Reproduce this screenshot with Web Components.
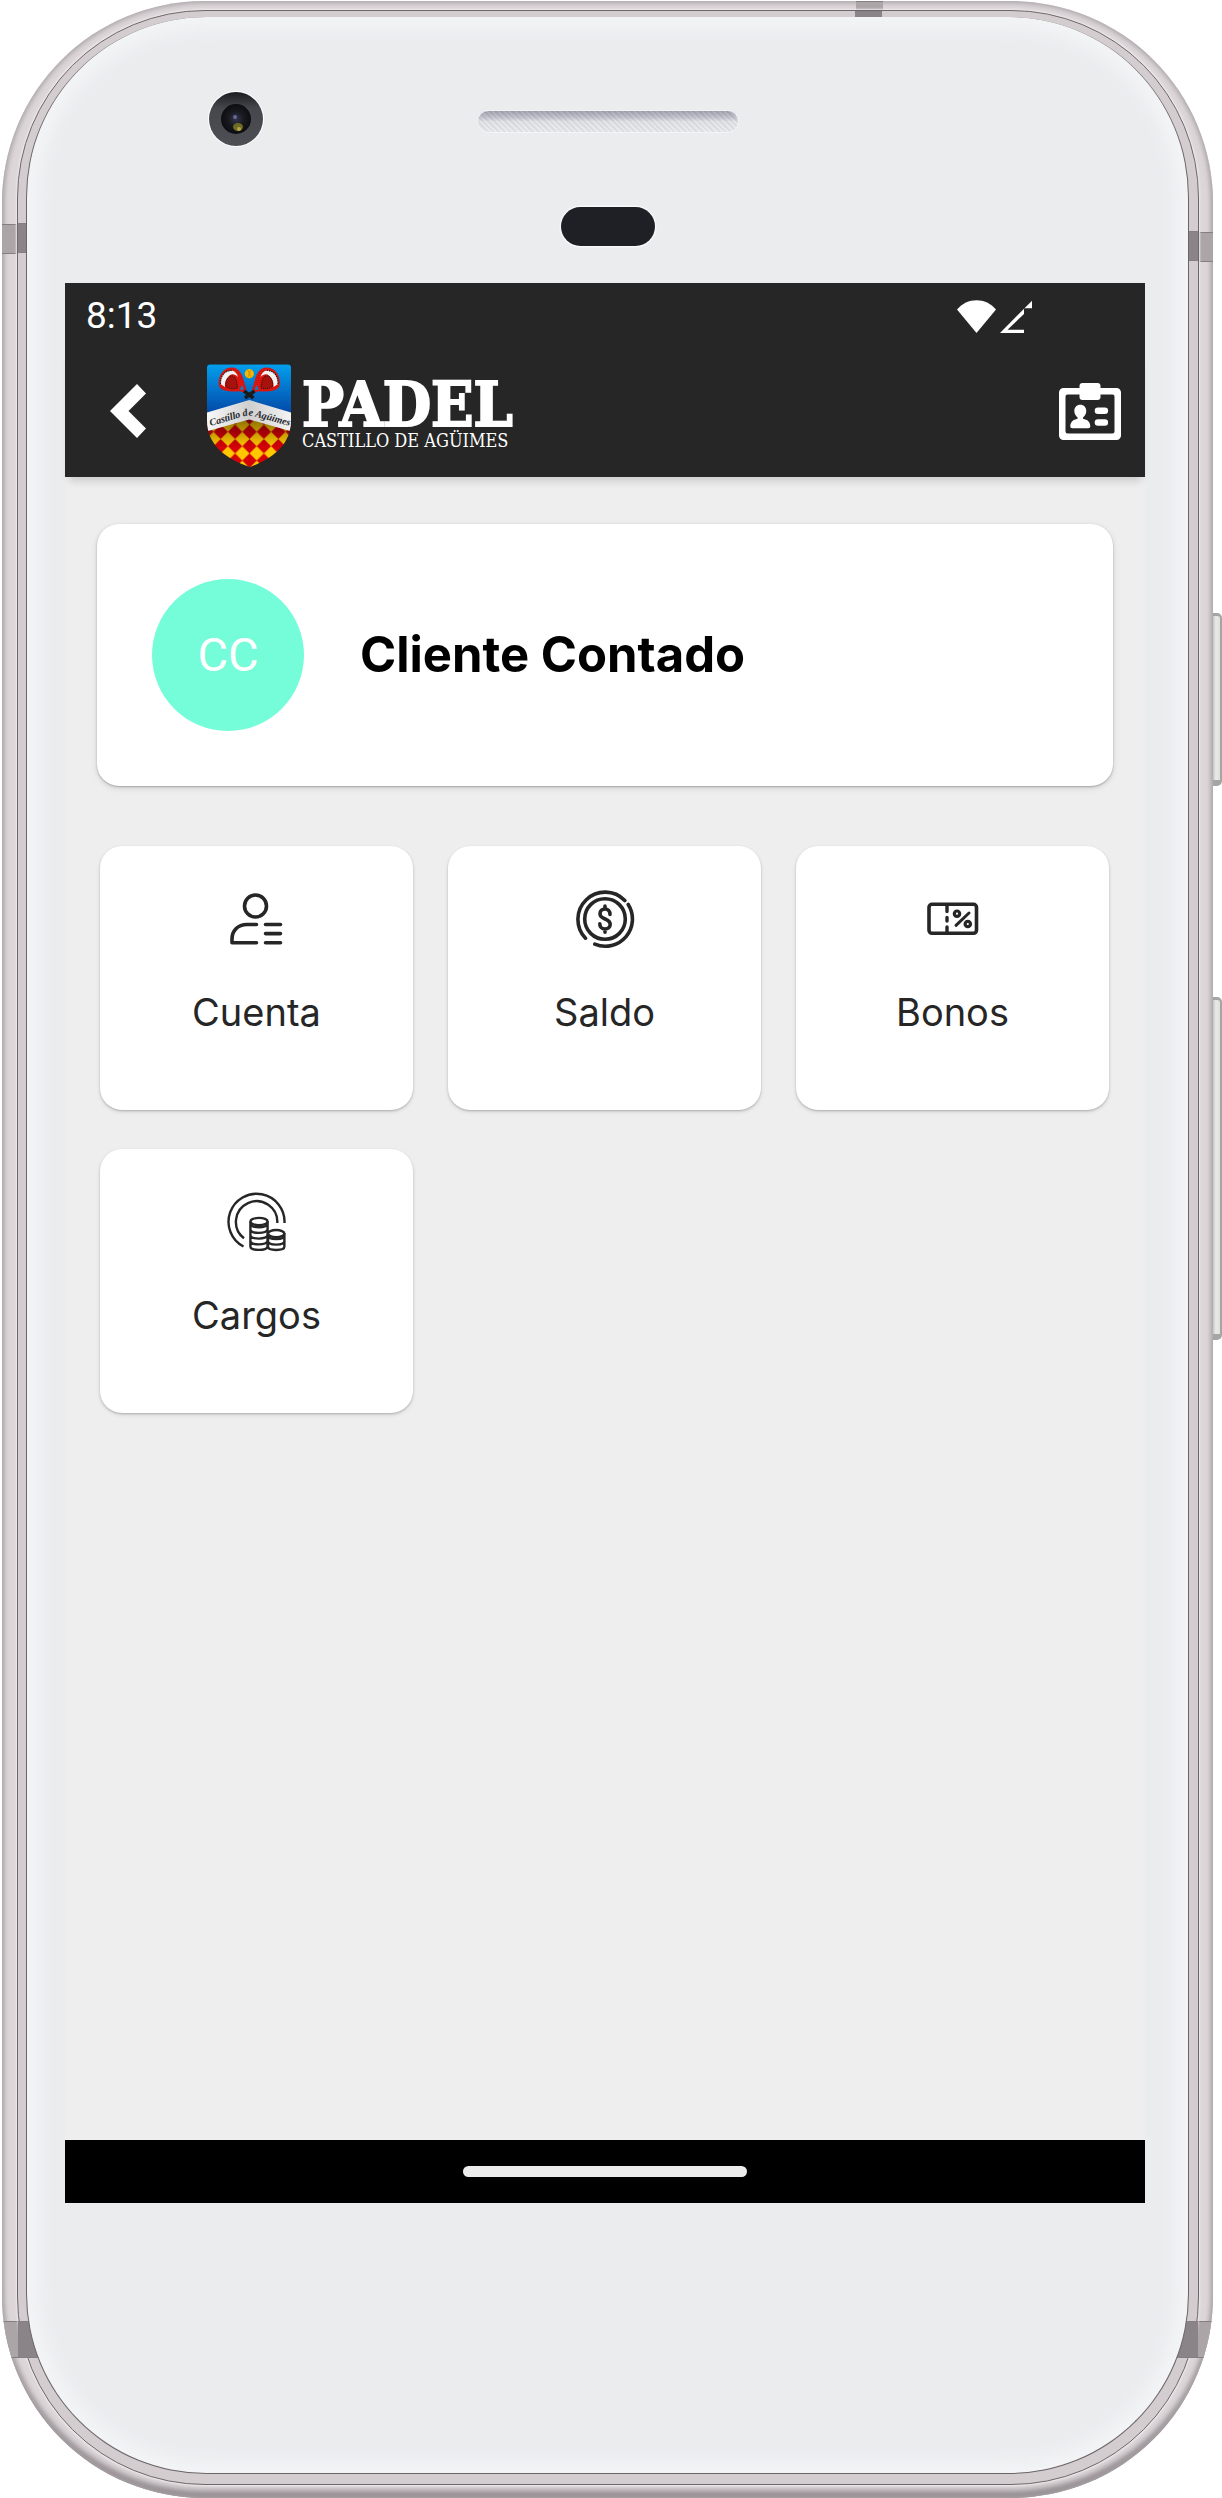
<!DOCTYPE html>
<html lang="es">
<head>
<meta charset="utf-8">
<meta name="viewport" content="width=device-width, initial-scale=1">
<title>Padel Castillo de Agüimes</title>
<style>
  body {
    margin: 0;
    background: #fff;
    font-family: Inter, "Open Sans", sans-serif;
    color: #262626;
  }

  .screen-content {
    flex: 1;
    display: flex;
    flex-direction: column;
    gap: 60px;
    padding: 47px 32px;
  }

  .menu {
    display: grid;
    grid-template-columns: repeat(3, 1fr);
    gap: 39px 35px;
    margin: 0 4px 0 3px;
  }
</style>
</head>
<body>
  <phone-device>
    <status-bar>8:13</status-bar>
    <app-bar>
      <club-logo>
        PADEL
        <span slot="subtitle">CASTILLO DE AGÜIMES</span>
      </club-logo>
    </app-bar>
    <main class="screen-content">
      <client-card initials="CC">Cliente Contado</client-card>
      <nav class="menu">
        <menu-tile>
          <svg slot="icon" viewBox="0 0 60 60" width="60" height="60" fill="none" stroke="#262626" stroke-width="3.6" stroke-linecap="round" stroke-linejoin="round">
            <circle cx="28.5" cy="17" r="11"/>
            <path d="M29.5 35.5H20C10.500 35.500 5 42 5 50v3.700h24.500M38.500 35.500h15M38.500 44.600h15M38.500 53.700h15"/>
          </svg>
          Cuenta
        </menu-tile>
        <menu-tile>
          <svg slot="icon" viewBox="0 0 60 60" width="60" height="60" fill="none" stroke="#262626" stroke-width="3.6" stroke-linecap="round">
            <circle cx="30" cy="30" r="20.300"/>
            <path d="M49.800 11.500A27.200 27.200 0 0 0 10.500 49.200M53.200 15.500A27.200 27.200 0 0 1 19.800 55.200"/>
            <path d="M35 25.500c0-3.300-2-5.500-5-5.500s-5 2-5 4.700c0 6.300 10.200 4.300 10.200 10.600 0 2.800-2.200 4.800-5.200 4.800s-5.200-2.200-5.200-5.400M30 17v3M30 40v3.200" stroke-width="3.600"/>
          </svg>
          Saldo
        </menu-tile>
        <menu-tile>
          <svg slot="icon" viewBox="0 0 60 60" width="60" height="60" fill="none" stroke="#262626" stroke-width="3.600" stroke-linecap="round">
            <rect x="6" y="15.300" width="47.500" height="29" rx="3"/>
            <path d="M24 17v5.500M24 28.500v3.500M24 38v5" stroke-width="3.400"/>
            <circle cx="34" cy="24.700" r="2.700" stroke-width="3.200"/>
            <circle cx="44.800" cy="35" r="2.700" stroke-width="3.200"/>
            <path d="M33 36.300L46 24" stroke-width="3"/>
          </svg>
          Bonos
        </menu-tile>
        <menu-tile>
          <svg slot="icon" viewBox="0 0 60 60" width="60" height="60" fill="none" stroke="#262626" stroke-width="2.400">
            <path d="M57.500 31A28 28 0 1 0 16.500 54.500M50.300 31A20.700 20.700 0 1 0 17 46.300"/>
            <ellipse cx="32" cy="29.500" rx="8.600" ry="3.600"/>
            <path d="M23.400 29.500v25c0 4.500 17.200 4.500 17.200 0v-25M23.400 31.500c0 5 17.200 5 17.200 0M23.400 37.300c0 4.800 17.200 4.800 17.200 0M23.400 43c0 4.800 17.200 4.800 17.200 0M23.400 48.800c0 4.800 17.200 4.800 17.200 0"/>
            <ellipse cx="49.200" cy="41.600" rx="8.200" ry="3.600"/>
            <path d="M57.400 41.600v13c0 4.500-16.400 4.500-16.400 0v-13M41 43.500c0 4.800 16.400 4.800 16.400 0M41 49c0 4.800 16.400 4.800 16.400 0"/>
          </svg>
          Cargos
        </menu-tile>
      </nav>
    </main>
    <gesture-bar></gesture-bar>
  </phone-device>

<script>
  function attach(el, html) {
    const template = document.createElement("template");
    template.innerHTML = html;
    el.attachShadow({ mode: "open" }).appendChild(template.content.cloneNode(true));
  }

  // the white handset: metal rim, bevel, glass face and the screen slot
  class PhoneDevice extends HTMLElement {
    constructor() {
      super();
      attach(this, `
        <style>
          :host {
            display: flex;
            position: relative;
            box-sizing: border-box;
            min-height: 100vh;
            padding: 1px 9px 0 2px;
          }

          .rim, .bevel, .face, .screen {
            display: flex;
            flex-direction: column;
            flex: 1;
            min-width: 0;
          }

          .rim {
            position: relative;
            overflow: hidden;
            padding: 9px 14px 13px 15px;
            border-radius: 202px;
            background: #dcd6d9;
            box-shadow: inset 0 0 5px 2px #aba4a8, inset 0 -9px 6px -2px #8b8488;
          }

          .bevel {
            position: relative;
            padding: 6px 9px 10px 8px;
            border: 1px solid #6f676b;
            border-radius: 188px;
            background: #d3cdd0;
            box-shadow: 0 0 2px 1px #eee9eb;
          }

          .band {
            position: absolute;
            height: 30px;
            width: 50px;
            background: #aba5a8;
            border: solid #857d82;
            border-width: 1px 0;
            box-sizing: border-box;
          }
          .tl { left: 0; top: 223px; }
          .tr { right: 0; top: 231px; }
          .bl { left: 0; bottom: 140px; height: 37px; }
          .br { right: 0; bottom: 140px; height: 37px; }
          .top { left: 70.500%; top: 0; width: 27px; }

          .bevel .band { background: #8a8387; }
          .bevel .tl { top: 212px; }
          .bevel .tr { top: 220px; }
          .bevel .bl, .bevel .br { bottom: 126px; }
          .bevel .top { left: 70.900%; }

          .face {
            position: relative;
            padding: 0 43px 0 38px;
            border-radius: 180px;
            border: solid #6b6468;
            border-width: 0 1px 1px;
            background: #ebecee;
            box-shadow: inset 0 0 16px 12px #f3f4f6;
          }

          .top-bezel {
            display: grid;
            grid-template-columns: 1fr 262px 1fr;
            align-items: start;
            justify-items: center;
            box-sizing: border-box;
            height: 266px;
            padding: 74px 0 0 5px;
          }

          .camera {
            justify-self: start;
            margin-left: 138px;
          }

          .speaker {
            width: 262px;
            height: 23px;
            margin-top: 19px;
            box-sizing: border-box;
            border-radius: 12px;
            border: 1px solid #f4f4f6;
            background:
              repeating-linear-gradient(45deg, #ffffff33 0 2px, #bfc1c733 2px 4px),
              linear-gradient(#8f919f, #b5b7c2 30%, #dcdde1 50%, #e6e7ea);
          }

          .sensor {
            grid-column: 2;
            width: 94px;
            height: 39px;
            margin-top: 22px;
            border-radius: 20px;
            background: #1e2025;
            box-shadow: 0 0 2px 1px #fff;
          }

          .screen {
            background: #eee;
          }

          .bottom-bezel {
            height: 270px;
          }

          .key {
            position: absolute;
            right: 0;
            width: 9px;
            box-sizing: border-box;
            border-radius: 0 5px 5px 0;
            border: solid #a5a6a4;
            border-width: 3px 2px 6px 0;
            background: linear-gradient(90deg, #c4c5c3, #e8eae7 40%, #dfe1dd);
          }
          .power { top: 613px; height: 173px; }
          .volume { top: 997px; height: 343px; }
        </style>

        <div class="rim">
          <span class="band tl"></span><span class="band tr"></span>
          <span class="band bl"></span><span class="band br"></span>
          <span class="band top"></span>
          <div class="bevel">
            <span class="band tl"></span><span class="band tr"></span>
            <span class="band bl"></span><span class="band br"></span>
            <span class="band top"></span>
            <div class="face">
              <div class="top-bezel">
                <svg class="camera" viewBox="0 0 56 56" width="56" height="56">
                  <defs>
                    <radialGradient id="lens">
                      <stop offset="0" stop-color="#34344f"/>
                      <stop offset="0.500" stop-color="#191b20"/>
                      <stop offset="1" stop-color="#0c0d10"/>
                    </radialGradient>
                    <linearGradient id="ring" x2="0" y2="1">
                      <stop offset="0" stop-color="#1b1c20"/>
                      <stop offset="0.300" stop-color="#46474d"/>
                      <stop offset="1" stop-color="#4d4f55"/>
                    </linearGradient>
                  </defs>
                  <circle cx="28" cy="28" r="28" fill="#fff"/>
                  <circle cx="28" cy="28" r="27" fill="url(#ring)"/>
                  <circle cx="28" cy="28" r="15" fill="url(#lens)"/>
                  <circle cx="27" cy="26" r="2" fill="#6a6a96"/>
                  <ellipse cx="30" cy="36" rx="5" ry="4" fill="#6f6d24"/>
                  <circle cx="31" cy="38" r="2" fill="#b5a64d"/>
                </svg>
                <span class="speaker"></span>
                <span class="sensor"></span>
              </div>
              <div class="screen"><slot></slot></div>
              <div class="bottom-bezel"></div>
            </div>
          </div>
        </div>
        <span class="key power"></span>
        <span class="key volume"></span>
      `);
    }
  }

  class StatusBar extends HTMLElement {
    constructor() {
      super();
      attach(this, `
        <style>
          :host {
            display: flex;
            align-items: center;
            height: 66px;
            padding: 0 113px 0 21px;
            background: #262626;
            color: #fff;
            font: 37px/44px Roboto, sans-serif;
          }
          .signals {
            display: flex;
            gap: 4px;
            margin-left: auto;
          }
        </style>
        <slot></slot>
        <span class="signals">
          <svg viewBox="0 0 39 33" width="39" height="33" fill="#fff"><path d="M19.500 33L0 9.500C10-3 29-3 39 9.500z"/></svg>
          <svg viewBox="0 0 32 33" width="32" height="33" fill="#fff"><path d="M32 .7V8.300H24V14L7.500 29.700H24V33H0L24 8.700z"/></svg>
        </span>
      `);
    }
  }

  class AppBar extends HTMLElement {
    constructor() {
      super();
      attach(this, `
        <style>
          :host {
            display: flex;
            align-items: center;
            height: 128px;
            padding: 0 24px 0 21px;
            background: #262626;
            color: #fff;
            box-shadow: 0 8px 8px -4px #00000026;
          }
          button {
            display: flex;
            align-items: center;
            justify-content: center;
            height: 96px;
            padding: 0 0 4px;
            border: 0;
            background: none;
            color: inherit;
            cursor: pointer;
          }
          .back {
            width: 84px;
            margin-right: 36px;
          }
          .card {
            margin-left: auto;
          }
        </style>
        <button class="back" aria-label="Volver">
          <svg viewBox="0 0 36 54" width="36" height="54" fill="currentColor"><path d="M27 0l9 9.500L18.500 27 36 44.500 27 54 0 27z"/></svg>
        </button>
        <slot></slot>
        <button class="card" aria-label="Carnet">
          <svg viewBox="0 0 62 57" width="62" height="57" fill="currentColor">
            <path fill-rule="evenodd" d="M4.500 5h53a4.500 4.500 0 0 1 4.500 4.500v43a4.500 4.500 0 0 1-4.500 4.500h-53A4.500 4.500 0 0 1 0 52.500v-43A4.500 4.500 0 0 1 4.500 5zM8.500 11.500a2 2 0 0 0-2 2v35a2 2 0 0 0 2 2h45a2 2 0 0 0 2-2v-35a2 2 0 0 0-2-2z"/>
            <rect x="20.500" width="21" height="17" rx="3"/>
            <path d="M21.300 21.700c3.600 0 6 2.600 6 6.200 0 3-1.600 5-3.300 6.500v1.300c4.500.8 7.300 3.300 7.300 7.600 0 1.300-.6 2-2 2h-16c-1.400 0-2-.7-2-2 0-4.300 2.800-6.800 7.300-7.600v-1.300c-1.700-1.500-3.300-3.500-3.300-6.500 0-3.600 2.400-6.200 6-6.200z"/>
            <rect x="35.700" y="24.600" width="13.400" height="6.400" rx="3.200"/>
            <rect x="35.700" y="36.300" width="13.400" height="6.400" rx="3.200"/>
          </svg>
        </button>
      `);
    }
  }

  class ClubLogo extends HTMLElement {
    constructor() {
      super();
      attach(this, `
        <style>
          :host {
            display: flex;
            align-items: center;
            gap: 10px;
            padding-top: 5px;
          }
          .name {
            display: flex;
            flex-direction: column;
            gap: 2px;
            white-space: nowrap;
            font: bold 62px/48px "DejaVu Serif Condensed", "DejaVu Serif", serif;
            -webkit-text-stroke: 2px #fff;
          }
          slot[name] {
            display: block;
            font: 18px/20px "DejaVu Serif Condensed", "DejaVu Serif", serif;
            -webkit-text-stroke: 0;
          }
        </style>
        <svg viewBox="0 0 86 104" width="86" height="104">
          <defs>
            <linearGradient id="sky" x2="0" y2="1">
              <stop offset="0" stop-color="#03a0ee"/>
              <stop offset="1" stop-color="#0347a6"/>
            </linearGradient>
            <linearGradient id="cloth">
              <stop offset="0" stop-color="#fafafa"/>
              <stop offset="0.500" stop-color="#cfcfcf"/>
              <stop offset="1" stop-color="#f4f4f4"/>
            </linearGradient>
            <linearGradient id="shade" x2="0" y2="1">
              <stop offset="0.500" stop-color="#000" stop-opacity="0.500"/>
              <stop offset="0.800" stop-color="#000" stop-opacity="0"/>
            </linearGradient>
            <pattern id="check" width="14.400" height="14.400" x="7.500" y="3" patternUnits="userSpaceOnUse">
              <path fill="#ffc800" d="M0 0h14.400v14.400H0z"/>
              <path fill="#d40008" d="M7.200 0l7.200 7.200-7.200 7.200L0 7.200z"/>
            </pattern>
            <clipPath id="shield">
              <path d="M4 .5h78a3 3 0 0 1 3 3V56C85 80 68 94 44 103 18 94 1 80 1 56V3.500a3 3 0 0 1 3-3z"/>
            </clipPath>
            <g id="racket">
              <path d="M13 22C11 11 18 3.500 26 3.500c7 0 10.500 7 12 14l2.500 8-3 3c-4-2-6-1-9-1-6 0-14-1-15.500-5.500z" fill="#d8160f"/>
              <path d="M14.500 20C14 11 20 6 26 6.500c3 .5 5 3 6 6.500-3-3-6-3.500-8.500-1.500-3 3-5 6-4.500 11.500z" fill="#f2f2f2"/>
              <path d="M14.500 20C14 11 20 6 26 6.500" fill="none" stroke="#2a1a1a" stroke-width="1.200" stroke-dasharray="1.500 .8"/>
              <path d="M20 22.500c-.5-6 1.500-9.500 4.500-10.500 4-1 6.500 3 7 12-4 1-8 1-11.500-1.500z" fill="#a8120d" stroke="#1e1010" stroke-dasharray="1 1"/>
              <path d="M33.500 26l2.500-5 2 4.500z" fill="#1479c4"/>
              <path d="M38 27l9.500 7" stroke="#1b1b1d" stroke-width="3.500"/>
            </g>
          </defs>
          <g clip-path="url(#shield)">
            <path fill="url(#check)" d="M0 40h86v64H0z"/>
            <path fill="url(#shade)" d="M0 0h86v104H0z"/>
            <path fill="url(#sky)" d="M0 0h86v50L43 38 0 50z"/>
            <use href="#racket"/>
            <use href="#racket" transform="matrix(-1 0 0 1 86.500 0)"/>
            <circle cx="43.300" cy="9.700" r="4.600" fill="#f6b800"/>
            <path d="M41.500 6c2 2 2 5 0 7.500M45.300 6c-2 2-2 5 0 7.500" fill="none" stroke="#b98300" stroke-width=".8"/>
            <path d="M0 48.700L43.300 36 86 48.700V67.500L43.300 55.500 0 67.500z" fill="url(#cloth)"/>
            <path id="fold" d="M4.500 62L37 52.500l5-1.200 5 .7L86 62.500" fill="none"/>
            <text font-family="Liberation Serif, serif" font-size="10" font-weight="bold" font-style="italic" fill="#26262b"><textPath href="#fold">Castillo de Agüimes</textPath></text>
          </g>
        </svg>
        <div class="name">
          <slot></slot>
          <slot name="subtitle"></slot>
        </div>
      `);
    }
  }

  class ClientCard extends HTMLElement {
    constructor() {
      super();
      attach(this, `
        <style>
          :host {
            display: flex;
            align-items: center;
            gap: 56px;
            box-sizing: border-box;
            height: 262px;
            padding: 0 55px;
            border-radius: 22px;
            background: #fff;
            color: #000;
            font-size: 49px;
            line-height: 56px;
            font-weight: 700;
            box-shadow: 0 1px 2px #00000040, 0 2px 6px #0000001f;
          }
          .avatar {
            display: flex;
            align-items: center;
            justify-content: center;
            flex: none;
            width: 152px;
            height: 152px;
            border-radius: 50%;
            background: #75fcd8;
            color: #fff;
            font: 47px/56px Roboto, sans-serif;
          }
        </style>
        <span class="avatar"></span>
        <slot></slot>
      `);
    }

    connectedCallback() {
      this.shadowRoot.querySelector(".avatar").textContent = this.getAttribute("initials");
    }
  }

  class MenuTile extends HTMLElement {
    constructor() {
      super();
      attach(this, `
        <style>
          :host {
            display: block;
          }
          button {
            display: flex;
            flex-direction: column;
            align-items: center;
            gap: 39px;
            width: 100%;
            height: 264px;
            padding: 43px 0 0;
            border: 0;
            border-radius: 22px;
            background: #fff;
            color: inherit;
            font: 38px/48px Inter, "Open Sans", sans-serif;
            box-shadow: 0 1px 2px #00000033, 0 2px 4px #0000001a;
            cursor: pointer;
          }
        </style>
        <button>
          <slot name="icon"></slot>
          <span><slot></slot></span>
        </button>
      `);
    }
  }

  class GestureBar extends HTMLElement {
    constructor() {
      super();
      attach(this, `
        <style>
          :host {
            display: flex;
            align-items: center;
            justify-content: center;
            height: 63px;
            background: #000;
          }
          span {
            width: 284px;
            height: 11px;
            border-radius: 6px;
            background: #ececec;
          }
        </style>
        <span></span>
      `);
    }
  }

  customElements.define("phone-device", PhoneDevice);
  customElements.define("status-bar", StatusBar);
  customElements.define("app-bar", AppBar);
  customElements.define("club-logo", ClubLogo);
  customElements.define("client-card", ClientCard);
  customElements.define("menu-tile", MenuTile);
  customElements.define("gesture-bar", GestureBar);
</script>
</body>
</html>
